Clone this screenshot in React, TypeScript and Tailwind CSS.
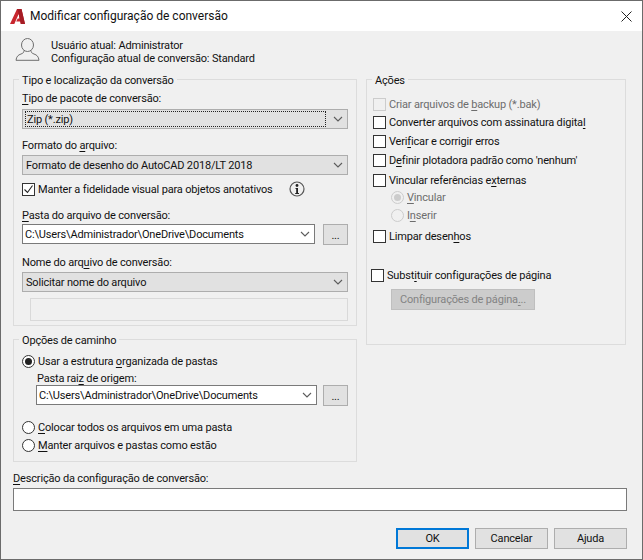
// Modificar configuração de conversão: AutoCAD eTransmit settings dialog

import type { ReactNode } from "react";

// ─── Small drawings ───────────────────────────────────────────────────────────

function Chevron() {
  return (
    <svg width="10" height="6" viewBox="0 0 10 6" fill="none" className="shrink-0">
      <path d="M1 1l4 4 4-4" stroke="#5c5c5c" strokeWidth="1.1" />
    </svg>
  );
}

function AppLogo() {
  return (
    <svg width="15" height="15" viewBox="0 0 15 15" className="shrink-0">
      <path d="M0 15L7 0h4.500l3.500 15h-4.200l-.5-2.500H6.200L7.700 9.500h1.800L8.700 5 4.300 15z" fill="#c8262e" />
      <path d="M7 0h4.500l3.500 15h-4.200L8.700 5z" fill="#a51c24" />
    </svg>
  );
}

function UserIcon() {
  return (
    <svg width="25" height="23" viewBox="0 0 25 23" fill="none" className="shrink-0">
      <ellipse cx="12.5" cy="7" rx="6" ry="6.5" stroke="#6e6e6e" />
      <path d="M9 12.5c0 2-1 2.8-3 3.5-3 1-4.5 2.500-5 6.300h23c-.5-3.800-2-5.300-5-6.300-2-.7-3-1.500-3-3.500" stroke="#6e6e6e" />
    </svg>
  );
}

function InfoIcon() {
  return (
    <svg width="16" height="16" viewBox="0 0 16 16" fill="none" className="shrink-0">
      <circle cx="8" cy="8" r="7" stroke="#555555" strokeWidth="1.2" />
      <circle cx="8" cy="4.500" r="1.400" fill="#222222" />
      <path d="M6.500 7h2.500v5h1v1H6.200v-1h1V8h-.7z" fill="#222222" />
    </svg>
  );
}

// ─── Form controls ────────────────────────────────────────────────────────────

function Key({ children }: { children: ReactNode }) {
  return <span className="underline underline-offset-2">{children}</span>;
}

function Check({ checked, disabled, children, className = "" }: { checked?: boolean; disabled?: boolean; children: ReactNode; className?: string }) {
  return (
    <div className={`flex items-center h-[14px] gap-[3px] ${disabled ? "text-[#6d6d6d]" : ""} ${className}`}>
      <span className={`flex items-center justify-center w-[13px] h-[13px] border shrink-0 ${disabled ? "border-[#cccccc]" : "border-[#333333] bg-white"}`}>
        {checked && (
          <svg width="11" height="11" viewBox="0 0 11 11" fill="none">
            <path d="M1.500 5.500l3 3 5-7" stroke="#222222" strokeWidth="1.100" />
          </svg>
        )}
      </span>
      <span className="whitespace-nowrap pt-[2px]">{children}</span>
    </div>
  );
}

function Radio({ selected, disabled, children, className = "" }: { selected?: boolean; disabled?: boolean; children: ReactNode; className?: string }) {
  return (
    <div className={`flex items-center h-[14px] gap-[3px] ${disabled ? "text-[#6d6d6d]" : ""} ${className}`}>
      <span className={`flex items-center justify-center w-[13px] h-[13px] rounded-full border shrink-0 ${disabled ? "border-[#cccccc]" : "border-[#333333] bg-white"}`}>
        {selected && <span className={`w-[7px] h-[7px] rounded-full ${disabled ? "bg-[#cccccc]" : "bg-[#222222]"}`} />}
      </span>
      <span className="whitespace-nowrap pt-[2px]">{children}</span>
    </div>
  );
}

function FieldLabel({ children, className = "" }: { children: ReactNode; className?: string }) {
  return <div className={`h-[14px] leading-[16px] whitespace-nowrap ${className}`}>{children}</div>;
}

function GraySelect({ children, focused, className = "" }: { children: ReactNode; focused?: boolean; className?: string }) {
  return (
    <div className={`flex items-center h-[20px] bg-[#e1e1e1] border border-[#adadad] pr-[4px] ${className}`}>
      {focused ? (
        <div className="flex items-center flex-1 h-[16px] ml-[2px] mr-[7px] pl-[1px] pt-[1px] border border-dotted border-[#222222]">{children}</div>
      ) : (
        <div className="flex-1 pl-[3px] pt-[2px]">{children}</div>
      )}
      <Chevron />
    </div>
  );
}

function PathCombo({ children, className = "" }: { children: ReactNode; className?: string }) {
  return (
    <div className={`flex items-center h-[20px] bg-white border border-[#7a7a7a] pl-[2px] pr-[4px] ${className}`}>
      <div className="flex-1 whitespace-nowrap pt-[2px]">{children}</div>
      <Chevron />
    </div>
  );
}

function DotsButton() {
  return (
    <button className="flex items-end justify-center w-[25px] h-[21px] pb-[3px] bg-[#e1e1e1] border border-[#adadad] leading-[10px]">
      ...
    </button>
  );
}

function DialogButton({ children, primary }: { children: ReactNode; primary?: boolean }) {
  return (
    <button className={`w-[73px] h-[21px] bg-[#e1e1e1] ${primary ? "border-2 border-[#0078d7]" : "border border-[#adadad]"}`}>
      {children}
    </button>
  );
}

function Group({ title, children, className = "", legendClass = "-ml-[3px]" }: { title: string; children: ReactNode; className?: string; legendClass?: string }) {
  return (
    <fieldset className={`border border-[#dcdcdc] ${className}`}>
      <legend className={`px-[3px] h-[15px] leading-[17px] ${legendClass}`}>{title}</legend>
      {children}
    </fieldset>
  );
}

// ─── Dialog ───────────────────────────────────────────────────────────────────

export default function App() {
  return (
    <div className="flex flex-col w-[643px] h-[560px] border border-[#6b6b6b] bg-[#f0f0f0] text-[11px] leading-[14px] tracking-[-0.17px] text-[#111111] font-['Roboto',sans-serif] overflow-hidden">
      {/* Title bar */}
      <div className="flex items-center h-[30px] shrink-0 bg-white pl-[9px] pr-[10px]">
        <AppLogo />
        <span className="flex-1 ml-[5px] text-[12px] tracking-normal">Modificar configuração de conversão</span>
        <svg width="11" height="11" viewBox="0 0 11 11" fill="none">
          <path d="M.5.500l10 10M10.500.500l-10 10" stroke="#222222" />
        </svg>
      </div>

      {/* Current user */}
      <div className="flex mt-[7px] pl-[14px] h-[27px]">
        <UserIcon />
        <div className="ml-[11px] pt-[1px] leading-[13px]">
          <div>Usuário atual: Administrator</div>
          <div>Configuração atual de conversão: Standard</div>
        </div>
      </div>

      <div className="flex gap-[9px] mt-[7px] pl-[12px] items-start">
        {/* Left column */}
        <div className="flex flex-col w-[344px]">
          <Group title="Tipo e localização da conversão" className="px-[8px] pb-[4px]">
            <FieldLabel className="mt-[4px]"><Key>T</Key>ipo de pacote de conversão:</FieldLabel>
            <GraySelect focused className="mt-[4px]">Zip (*.zip)</GraySelect>
            <FieldLabel className="mt-[9px]">Formato do <Key>a</Key>rquivo:</FieldLabel>
            <GraySelect className="mt-[3px]">Formato de desenho do AutoCAD 2018/LT 2018</GraySelect>
            <div className="flex items-center mt-[7px] h-[14px]">
              <Check checked className="w-[267px]">Manter a fidelidade visual para objetos anotativos</Check>
              <InfoIcon />
            </div>
            <FieldLabel className="mt-[12px]"><Key>P</Key>asta do arquivo de conversão:</FieldLabel>
            <div className="flex gap-[8px] mt-[2px]">
              <PathCombo className="flex-1">C:\Users\Administrador\OneDrive\Documents</PathCombo>
              <DotsButton />
            </div>
            <FieldLabel className="mt-[10px]">Nome do arq<Key>u</Key>ivo de conversão:</FieldLabel>
            <GraySelect className="mt-[3px]">Solicitar nome do arquivo</GraySelect>
            <div className="h-[23px] mt-[6px] ml-[8px] border border-[#d9d9d9]" />
          </Group>

          <Group title="Opções de caminho" className="mt-[6px] px-[8px] pb-[9px]">
            <Radio selected className="mt-[7px]">Usar a estrutura <Key>o</Key>rganizada de pastas</Radio>
            <FieldLabel className="mt-[3px] ml-[15px]">Pasta rai<Key>z</Key> de origem:</FieldLabel>
            <div className="flex gap-[6px] ml-[14px]">
              <PathCombo className="flex-1">C:\Users\Administrador\OneDrive\Documents</PathCombo>
              <DotsButton />
            </div>
            <Radio className="mt-[14px]"><Key>C</Key>olocar todos os arquivos em uma pasta</Radio>
            <Radio className="mt-[4px]"><Key>M</Key>anter arquivos e pastas como estão</Radio>
          </Group>
        </div>

        {/* Right column */}
        <Group title="Ações" className="w-[260px] pl-[6px] pb-[34px]" legendClass="-ml-[1px]">
          <Check disabled className="mt-[10px]">Criar arquivos de <Key>b</Key>ackup (*.bak)</Check>
          <Check className="mt-[4px]">Converter arquivos com assinatura digita<Key>l</Key></Check>
          <Check className="mt-[5px]">Veri<Key>f</Key>icar e corrigir erros</Check>
          <Check className="mt-[5px]">D<Key>e</Key>finir plotadora padrão como 'nenhum'</Check>
          <Check className="mt-[6px]">Vincular referências e<Key>x</Key>ternas</Check>
          <Radio selected disabled className="mt-[3px] ml-[18px]"><Key>V</Key>incular</Radio>
          <Radio disabled className="mt-[4px] ml-[18px]">I<Key>n</Key>serir</Radio>
          <Check className="mt-[7px]">Limpar desen<Key>h</Key>os</Check>
          <Check className="mt-[25px] -ml-[2px]">Subst<Key>i</Key>tuir configurações de página</Check>
          <button className="block w-[144px] h-[21px] mt-[7px] ml-[18px] bg-[#cccccc] border border-[#bfbfbf] text-[#838383]">
            Configurações de página<Key>.</Key>..
          </button>
        </Group>
      </div>

      {/* Description */}
      <div className="flex flex-col pl-[12px] pr-[15px]">
        <FieldLabel className="mt-[9px]"><Key>D</Key>escrição da configuração de conversão:</FieldLabel>
        <div className="h-[23px] mt-[3px] bg-white border border-[#7a7a7a]" />
        <div className="flex justify-end gap-[6px] mt-[17px]">
          <DialogButton primary>OK</DialogButton>
          <DialogButton>Cancelar</DialogButton>
          <DialogButton>Ajuda</DialogButton>
        </div>
      </div>
    </div>
  );
}
